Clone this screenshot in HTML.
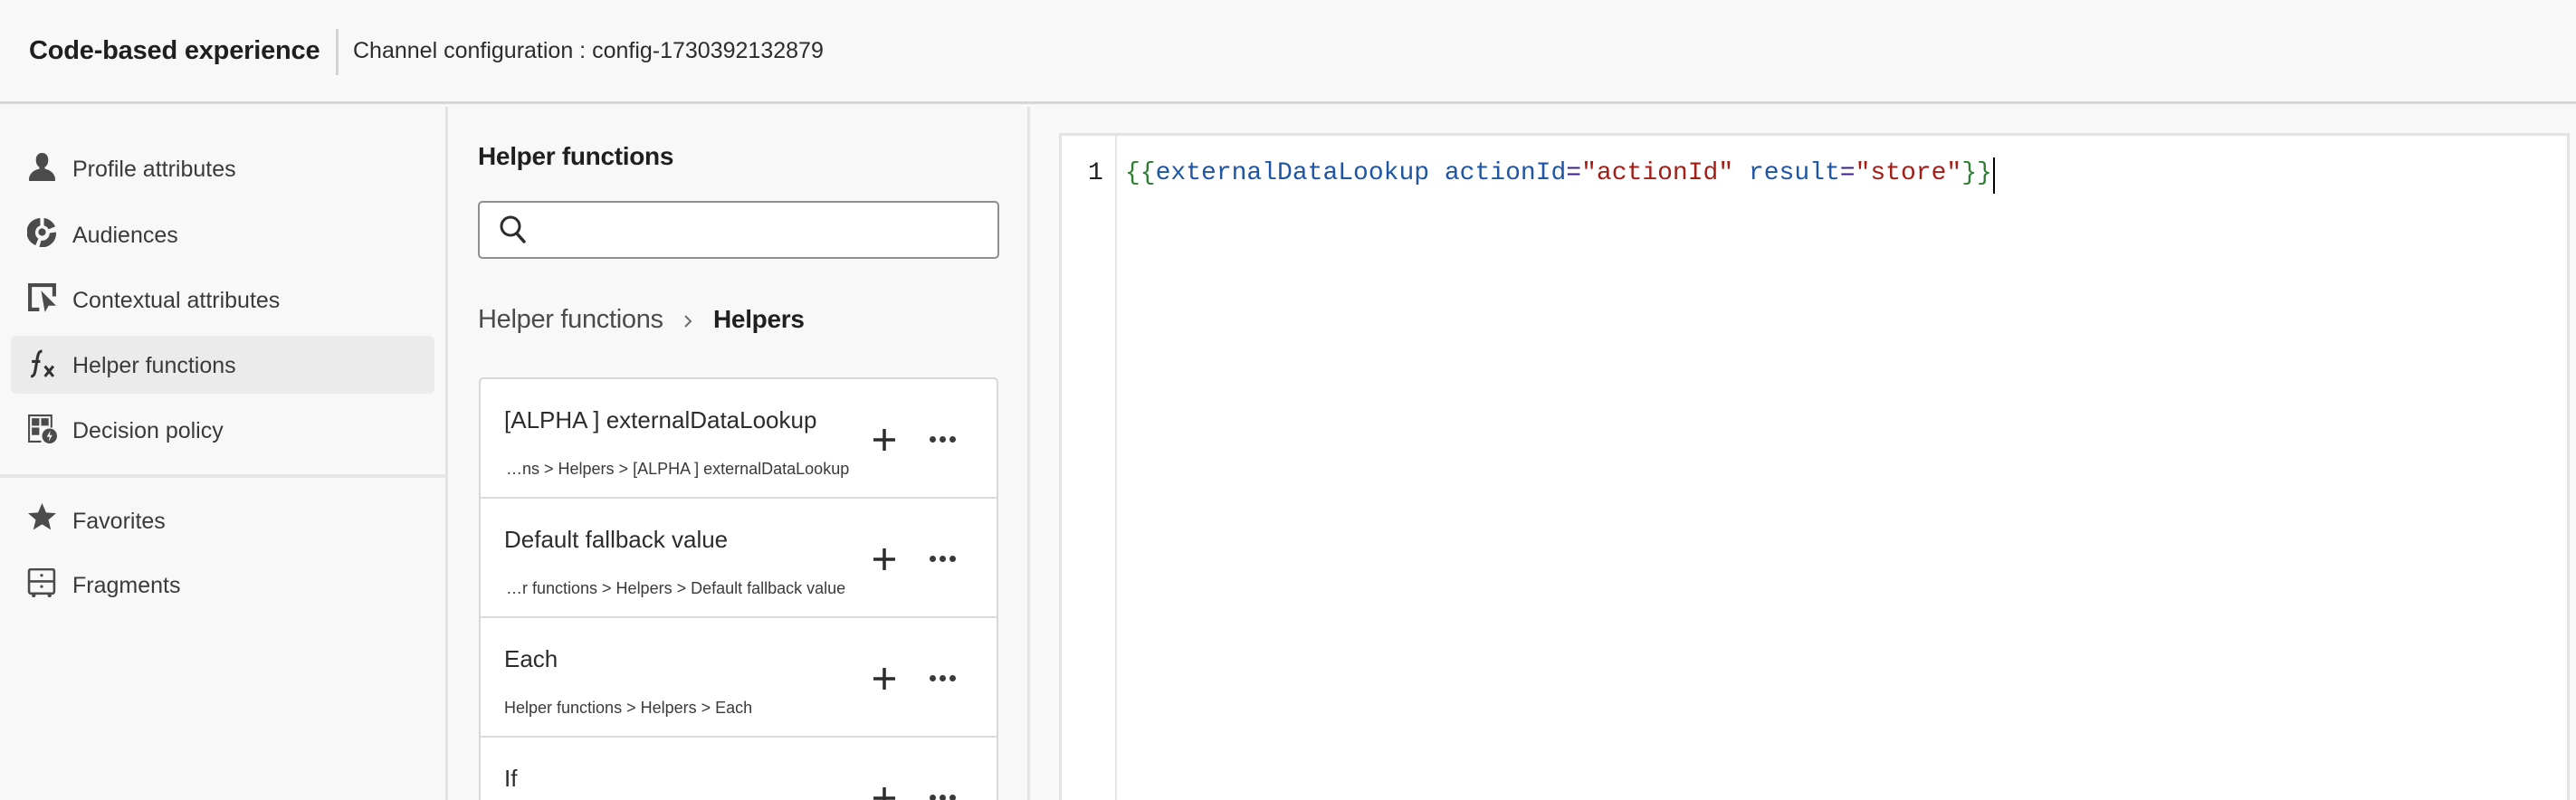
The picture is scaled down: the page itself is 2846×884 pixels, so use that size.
<!DOCTYPE html>
<html><head><meta charset="utf-8"><style>
*{margin:0;padding:0;box-sizing:border-box}
html,body{width:2846px;height:884px;overflow:hidden}
body{background:#f8f8f8;font-family:"Liberation Sans",sans-serif;color:#2c2c2c;position:relative}
.a{position:absolute}
.hdr{left:0;top:0;width:2846px;height:115px;background:#f8f8f8;border-bottom:3px solid #d6d6d6}
.nav{font-size:25px;color:#3a3a3a;left:80px;line-height:30px}
.ic{left:30px;width:33px;height:33px}
.card{left:529px;width:574px;background:#fff;border:2px solid #d8d8d8;border-bottom:none;border-radius:5px 5px 0 0;top:417px;height:467px;overflow:hidden}
.row{position:absolute;left:0;width:570px;height:132px;border-bottom:2px solid #dcdcdc}
.t{position:absolute;left:26px;top:30px;font-size:26px;color:#2c2c2c}
.s{position:absolute;left:28px;top:89px;font-size:18px;color:#3a3a3a}
.pl{position:absolute;left:431px;top:52px;width:30px;height:30px}
.dt{position:absolute;left:496px;top:63px;line-height:0;font-size:0}
.dt i{display:inline-block;width:7px;height:7px;border-radius:50%;background:#3a3a3a;margin-right:4px}
.code span{white-space:pre}
</style></head><body>
<div class="a hdr"></div>
<div class="a" style="left:32px;top:40px;font-size:29px;font-weight:bold;color:#1f1f1f;letter-spacing:-0.2px">Code-based experience</div>
<div class="a" style="left:371px;top:32px;width:3px;height:51px;background:#d2d2d2"></div>
<div class="a" style="left:390px;top:42px;font-size:25px;color:#2c2c2c">Channel configuration : config-1730392132879</div>

<div class="a" style="left:492px;top:118px;width:3px;height:766px;background:#e3e3e3"></div>
<div class="a" style="left:12px;top:371px;width:468px;height:64px;background:#ebebeb;border-radius:6px"></div>
<div class="a" style="left:0;top:524px;width:492px;height:4px;background:#e6e6e6"></div>

<svg class="a ic" style="top:168px" viewBox="0 0 32 32"><path d="M16 1c-5 0-7 4-6.5 9 .3 3 1.8 5 3.5 6v2c-5 1-10 4-11 10v3h28v-3c-1-6-6-9-11-10v-2c1.7-1 3.2-3 3.5-6C23 5 21 1 16 1z" fill="#4b4b4b"/></svg>
<div class="a nav" style="top:172px">Profile attributes</div>
<svg class="a ic" style="top:240px" viewBox="0 0 32 32"><path d="M14 1A15 15 0 0 0 9 30l3-7A8 8 0 0 1 14 9z M18 1v8a8 8 0 0 1 5 4l7-3A15 15 0 0 0 18 1z M24 17a8 8 0 0 1-9 8l-2 7a15 15 0 0 0 18-16z" fill="#4b4b4b"/><circle cx="16" cy="16" r="4" fill="#4b4b4b"/></svg>
<div class="a nav" style="top:245px">Audiences</div>
<svg class="a ic" style="top:312px" viewBox="0 0 32 32"><path d="M1 1h30v14h-4V5H5v22h8v4H1z" fill="#4b4b4b"/><path d="M15 9l16 16h-8l-4 7z" fill="#4b4b4b"/></svg>
<div class="a nav" style="top:317px">Contextual attributes</div>
<svg class="a ic" style="top:385px" viewBox="0 0 32 32"><path d="M4 30c3 0 4-2 5-8l2-12c1-5 2-7 5-7" stroke="#333" stroke-width="3" fill="none"/><path d="M5 14h9" stroke="#333" stroke-width="3"/><path d="M19 19l9 11M28 19l-9 11" stroke="#333" stroke-width="3"/></svg>
<div class="a nav" style="top:389px">Helper functions</div>
<svg class="a ic" style="top:457px" viewBox="0 0 32 32"><path d="M1 1h26v14h-2V3H3v26h12v2H1z" fill="#4b4b4b"/><rect x="5" y="5" width="8" height="8" fill="#4b4b4b"/><rect x="15" y="5" width="8" height="8" fill="#4b4b4b"/><rect x="5" y="15" width="8" height="8" fill="#4b4b4b"/><circle cx="24" cy="24" r="8" fill="#4b4b4b"/><path d="M25 18l-4 7h3l-1 5 4-7h-3z" fill="#f8f8f8"/></svg>
<div class="a nav" style="top:461px">Decision policy</div>
<svg class="a ic" style="top:555px" viewBox="0 0 32 32"><path d="M16 1l4.3 10 10.7.8-8.2 7 2.6 10.6L16 23.6 6.6 29.4l2.6-10.6-8.2-7L11.7 11z" fill="#4b4b4b"/></svg>
<div class="a nav" style="top:561px">Favorites</div>
<svg class="a ic" style="top:628px" viewBox="0 0 32 32"><rect x="2" y="1" width="27" height="26" rx="2" fill="none" stroke="#4b4b4b" stroke-width="2.5"/><path d="M2 14h27" stroke="#4b4b4b" stroke-width="2.5"/><circle cx="15.5" cy="7.5" r="1.6" fill="#4b4b4b"/><circle cx="15.5" cy="19.5" r="1.6" fill="#4b4b4b"/><rect x="5" y="27" width="4" height="4" rx="1.5" fill="#4b4b4b"/><rect x="22" y="27" width="4" height="4" rx="1.5" fill="#4b4b4b"/></svg>
<div class="a nav" style="top:632px">Fragments</div>

<div class="a" style="left:1135px;top:118px;width:3px;height:766px;background:#e3e3e3"></div>
<div class="a" style="left:528px;top:157px;font-size:28px;font-weight:bold;color:#1f1f1f;letter-spacing:-0.3px">Helper functions</div>
<div class="a" style="left:528px;top:222px;width:576px;height:64px;background:#fff;border:2px solid #8e8e8e;border-radius:5px"></div>
<svg class="a" style="left:550px;top:236px" width="36" height="36" viewBox="0 0 36 36"><circle cx="14" cy="14" r="10" fill="none" stroke="#2c2c2c" stroke-width="3"/><path d="M21 22l8 9" stroke="#2c2c2c" stroke-width="3.5" stroke-linecap="round"/></svg>
<div class="a" style="left:528px;top:337px;font-size:29px;color:#4b4b4b;letter-spacing:-0.3px">Helper functions</div>
<svg class="a" style="left:753px;top:345px" width="14" height="20" viewBox="0 0 14 20"><path d="M4 4l6 6-6 6" stroke="#6e6e6e" stroke-width="2" fill="none"/></svg>
<div class="a" style="left:788px;top:337px;font-size:28px;font-weight:bold;color:#1f1f1f;letter-spacing:-0.3px">Helpers</div>

<div class="a card">
 <div class="row" style="top:0"><div class="t">[ALPHA ] externalDataLookup</div><div class="s">…ns &gt; Helpers &gt; [ALPHA ] externalDataLookup</div><svg class="pl" viewBox="0 0 30 30"><path d="M15 3v24M3 15h24" stroke="#2c2c2c" stroke-width="3.5"/></svg><div class="dt"><i></i><i></i><i></i></div></div>
 <div class="row" style="top:132px"><div class="t">Default fallback value</div><div class="s">…r functions &gt; Helpers &gt; Default fallback value</div><svg class="pl" viewBox="0 0 30 30"><path d="M15 3v24M3 15h24" stroke="#2c2c2c" stroke-width="3.5"/></svg><div class="dt"><i></i><i></i><i></i></div></div>
 <div class="row" style="top:264px"><div class="t">Each</div><div class="s" style="left:26px">Helper functions &gt; Helpers &gt; Each</div><svg class="pl" viewBox="0 0 30 30"><path d="M15 3v24M3 15h24" stroke="#2c2c2c" stroke-width="3.5"/></svg><div class="dt"><i></i><i></i><i></i></div></div>
 <div class="row" style="top:396px;height:71px;border:none"><div class="t">If</div><svg class="pl" viewBox="0 0 30 30"><path d="M15 3v24M3 15h24" stroke="#2c2c2c" stroke-width="3.5"/></svg><div class="dt"><i></i><i></i><i></i></div></div>
</div>

<div class="a" style="left:1170px;top:147px;width:1669px;height:737px;background:#fff;border:3px solid #e3e3e3;border-bottom:none"></div>
<div class="a" style="left:1232px;top:150px;width:2px;height:734px;background:#e6e6e6"></div>
<div class="a" style="left:1202px;top:176px;font-family:'Liberation Mono',monospace;font-size:28px;color:#1f1f1f">1</div>
<div class="a code" style="left:1243px;top:176px;font-family:'Liberation Mono',monospace;font-size:28px"><span style="color:#2e7d32">{{</span><span style="color:#1f55a5">externalDataLookup actionId</span><span style="color:#3a1f8a">=</span><span style="color:#a31e16">"actionId"</span><span style="color:#1f55a5"> result</span><span style="color:#3a1f8a">=</span><span style="color:#a31e16">"store"</span><span style="color:#2e7d32">}}</span></div>
<div class="a" style="left:2202px;top:174px;width:2px;height:40px;background:#000"></div>
</body></html>
